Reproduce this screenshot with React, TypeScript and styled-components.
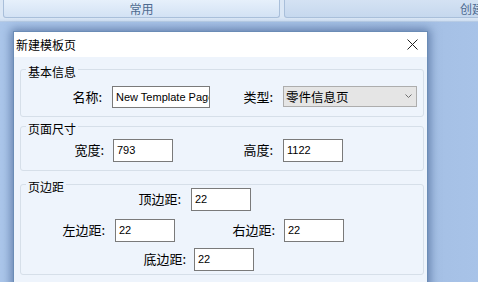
import styled, { createGlobalStyle } from 'styled-components'

const GlobalStyle = createGlobalStyle`
  html, body {
    margin: 0;
    padding: 0;
    width: 478px;
    height: 282px;
    overflow: hidden;
    background: #a7c2e6;
  }
  * { box-sizing: border-box; }
`

const Page = styled.div`
  width: 478px;
  height: 282px;
  overflow: hidden;
  font-family: "Noto Sans CJK SC", sans-serif;
  font-size: 13px;
  color: #000;
`

const TabBar = styled.div`
  display: flex;
  gap: 4px;
  height: 22px;
  padding-left: 3px;
  background: linear-gradient(#dbe7f5 0px, #dbe7f5 18px, #c9daef 22px);
  border-bottom: 1px solid #b7cbe4;
`

const Tab = styled.div<{ $w: number; $dim?: boolean }>`
  flex: none;
  width: ${(p) => p.$w}px;
  height: 18px;
  display: flex;
  align-items: center;
  justify-content: center;
  font-size: 12px;
  line-height: 1;
  color: #4d6a8f;
  border: 1px solid #a9bfda;
  border-top: none;
  border-radius: 0 0 3px 3px;
  background: ${(p) =>
    p.$dim
      ? 'linear-gradient(#d4e2f3, #c6d8ee)'
      : 'linear-gradient(#e6f0fb, #d3e2f4)'};
`

const Desk = styled.div`
  height: 260px;
  padding: 9px 0 0 13px;
  background: linear-gradient(90deg, #abc6ea 0px, #a3bee3 400px, #a8c3e8 478px);
`

const Dialog = styled.div`
  width: 415px;
  height: 260px;
  border: 1px solid #6b8cb6;
  border-bottom: none;
  background: #eef4fc;
  box-shadow: 0 0 9px 2px rgba(40, 70, 120, 0.55);
`

const TitleBar = styled.div`
  height: 25px;
  display: flex;
  align-items: center;
  justify-content: space-between;
  padding: 0 9px 1px 2px;
  background: #fff;
  font-size: 12px;
`

const CloseIcon = () => (
  <svg width="11" height="11" viewBox="0 0 11 11">
    <path d="M0.5 0.5 L10.5 10.5 M10.5 0.5 L0.5 10.5" stroke="#222" strokeWidth="1" />
  </svg>
)

const Body = styled.div`
  padding: 12px 3px 0 6px;
  display: flex;
  flex-direction: column;
`

const Group = styled.div<{ $mt: number; $pb: number }>`
  margin-top: ${(p) => p.$mt}px;
  padding-bottom: ${(p) => p.$pb}px;
  border: 1px solid #d6dfe9;
  border-radius: 3px;
`

const Caption = styled.div`
  width: fit-content;
  margin: -5px 0 0 5px;
  padding: 0 2px;
  font-size: 12px;
  line-height: 14px;
  background: #eef4fc;
`

const Row = styled.div<{ $mt: number }>`
  display: flex;
  align-items: flex-start;
  margin-top: ${(p) => p.$mt}px;
`

const Label = styled.div<{ $w: number; $gap: number }>`
  flex: none;
  width: ${(p) => p.$w}px;
  margin-right: ${(p) => p.$gap}px;
  text-align: right;
  line-height: 22px;
  white-space: nowrap;
`

const Input = styled.div<{ $w: number; $h?: number }>`
  flex: none;
  width: ${(p) => p.$w}px;
  height: ${(p) => p.$h ?? 23}px;
  padding-left: 3px;
  border: 1px solid #7a7a7a;
  background: #fff;
  font-family: "Liberation Sans", Arial, sans-serif;
  font-size: 11px;
  line-height: ${(p) => (p.$h ?? 23) - 2}px;
  white-space: nowrap;
  overflow: hidden;
`

const Select = styled.div<{ $w: number }>`
  flex: none;
  width: ${(p) => p.$w}px;
  height: 21px;
  display: flex;
  align-items: center;
  justify-content: space-between;
  padding: 0 4px 0 2px;
  border: 1px solid #adadad;
  background: #e5e5e5;
  font-size: 12.5px;
  line-height: 19px;
`

const Chevron = () => (
  <svg width="7" height="5" viewBox="0 0 7 5">
    <path d="M0.5 0.5 L3.5 3.5 L6.5 0.5" stroke="#6f6f6f" strokeWidth="1" fill="none" />
  </svg>
)

function App() {
  return (
    <Page>
      <GlobalStyle />
      <TabBar>
        <Tab $w={277}>常用</Tab>
        <Tab $w={376} $dim>创建</Tab>
      </TabBar>
      <Desk>
        <Dialog>
          <TitleBar>
            <span>新建模板页</span>
            <CloseIcon />
          </TitleBar>
          <Body>
            <Group $mt={0} $pb={8}>
              <Caption>基本信息</Caption>
              <Row $mt={7}>
                <Label $w={81} $gap={10}>名称:</Label>
                <Input $w={98} $h={22}>New Template Page</Input>
                <Label $w={63} $gap={10}>类型:</Label>
                <Select $w={134}>
                  <span>零件信息页</span>
                  <Chevron />
                </Select>
              </Row>
            </Group>
            <Group $mt={9} $pb={8}>
              <Caption>页面尺寸</Caption>
              <Row $mt={3}>
                <Label $w={83} $gap={9}>宽度:</Label>
                <Input $w={60}>793</Input>
                <Label $w={100} $gap={10}>高度:</Label>
                <Input $w={60}>1122</Input>
              </Row>
            </Group>
            <Group $mt={13} $pb={3}>
              <Caption>页边距</Caption>
              <Row $mt={-6}>
                <Label $w={160} $gap={10}>顶边距:</Label>
                <Input $w={60}>22</Input>
              </Row>
              <Row $mt={8}>
                <Label $w={84} $gap={10}>左边距:</Label>
                <Input $w={60}>22</Input>
                <Label $w={100} $gap={9}>右边距:</Label>
                <Input $w={60}>22</Input>
              </Row>
              <Row $mt={6}>
                <Label $w={165} $gap={8}>底边距:</Label>
                <Input $w={60}>22</Input>
              </Row>
            </Group>
          </Body>
        </Dialog>
      </Desk>
    </Page>
  )
}

export default App
